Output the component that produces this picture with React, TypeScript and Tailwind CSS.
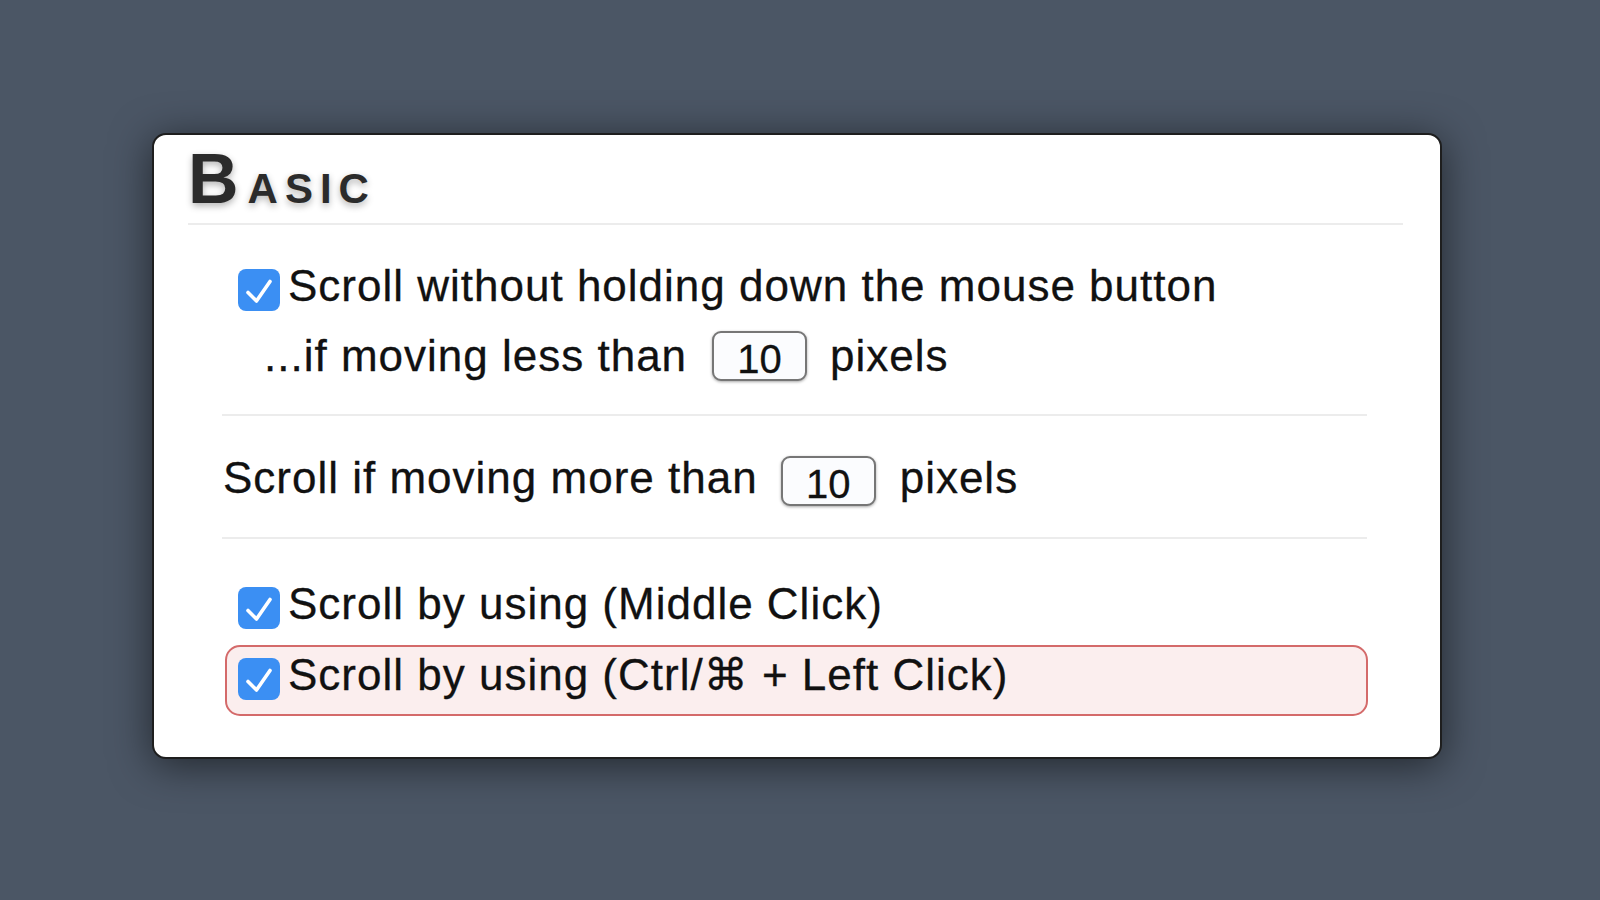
const font = { fontFamily: '"Liberation Sans", Arial, "DejaVu Sans", sans-serif' };

function CheckBox() {
  return (
    <span className="mt-[7px] flex h-[42px] w-[42px] shrink-0 items-center justify-center rounded-[8px] bg-[#3b8ff3]">
      <svg viewBox="0 0 42 42" className="h-[42px] w-[42px]" fill="none">
        <path
          d="M10 23.5 L18.5 32 L32 12.5"
          stroke="#ffffff"
          strokeWidth={3.6}
          strokeLinecap="round"
          strokeLinejoin="round"
        />
      </svg>
    </span>
  );
}

function NumberBox({ value, className = '' }: { value: string; className?: string }) {
  return (
    <span
      className={
        'flex h-[50px] w-[95px] shrink-0 items-center justify-center rounded-[9px] border-2 border-[#767676] bg-[#fbfcfe] text-[40px] leading-none tracking-normal text-[#111] shadow-[0_1px_3px_rgba(0,0,0,0.35)] ' +
        className
      }
    >
      <span className="pt-[5px]">{value}</span>
    </span>
  );
}

function Divider() {
  return <div className="h-[2px] bg-[#ececec]" />;
}

export default function App() {
  return (
    <div className="min-h-screen bg-[#4b5665] pl-[152px] pt-[133px]" style={font}>
      <div className="w-[1290px] rounded-[14px] border-2 border-[#1e1e1e] bg-white shadow-[0_6px_40px_rgba(0,0,0,0.55)]">
        {/* header */}
        <div className="pl-[34px] pr-[37px] pt-[9px]">
          <h1 className="flex h-[79px] items-baseline font-bold leading-[70px] text-[#2b2b2b] [text-shadow:0_3px_7px_rgba(0,0,0,0.3)]">
            <span className="text-[70px] tracking-[9px]">B</span>
            <span className="text-[42px] tracking-[7px]">ASIC</span>
          </h1>
          <Divider />
        </div>

        {/* body */}
        <div className="pl-[68px] pr-[73px] pb-[41px] text-[44px] leading-[48px] tracking-[1px] text-[#111] [-webkit-text-stroke:0.3px_#111]">
          <div className="pb-[33px] pt-[37px]">
            <div className="flex items-start gap-[8px] pl-[16px]">
              <CheckBox />
              <span>Scroll without holding down the mouse button</span>
            </div>
            <div className="mt-[20.5px] flex items-start pl-[42px]">
              <span>...if moving less than</span>
              <NumberBox value="10" className="ml-[25px] mr-[23px] -mt-[0.5px]" />
              <span>pixels</span>
            </div>
          </div>

          <Divider />

          <div className="pb-[31px] pt-[37.5px]">
            <div className="flex items-start pl-[1px]">
              <span>Scroll if moving more than</span>
              <NumberBox value="10" className="ml-[23px] mr-[24px] mt-[2.5px]" />
              <span>pixels</span>
            </div>
          </div>

          <Divider />

          <div className="pt-[40.5px]">
            <div className="flex items-start gap-[8px] pl-[16px]">
              <CheckBox />
              <span>Scroll by using (Middle Click)</span>
            </div>
            <div className="ml-[3px] mr-[-1px] mt-[16px] flex items-start gap-[8px] rounded-[15px] border-2 border-[#d46a6a] bg-[#fbeeee] pb-[14px] pl-[11px] pt-[4.5px]">
              <CheckBox />
              <span>Scroll by using (Ctrl/⌘ + Left Click)</span>
            </div>
          </div>
        </div>
      </div>
    </div>
  );
}
